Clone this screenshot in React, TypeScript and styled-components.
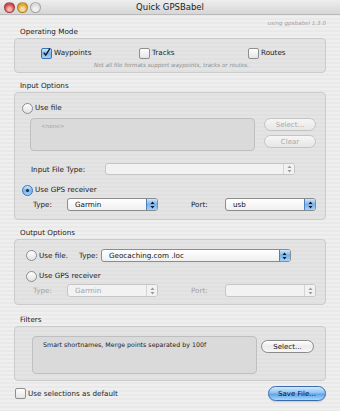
import { createGlobalStyle, styled } from "styled-components";

const GlobalStyle = createGlobalStyle`
  html, body {
    margin: 0;
    padding: 0;
  }
  body {
    font-family: "DejaVu Sans", "Liberation Sans", sans-serif;
    color: #1a1a1a;
  }
`;

const Window = styled.div`
  width: 340px;
  height: 411px;
  overflow: hidden;
  background: repeating-linear-gradient(to bottom, #efefef 0 2px, #e9e9e9 2px 4px);
`;

const TitleBar = styled.div`
  height: 15px;
  display: grid;
  grid-template-columns: 1fr auto 1fr;
  align-items: center;
  background: linear-gradient(to bottom, #eeeeee, #d6d6d6);
  border-bottom: 1px solid #b9b9b9;
  box-sizing: border-box;
`;

const Lights = styled.div`
  display: flex;
  gap: 2px;
  padding-left: 4px;
`;

const Light = styled.span<{ $c: string }>`
  width: 11px;
  height: 11px;
  border-radius: 50%;
  box-sizing: border-box;
  border: 1px solid rgba(0, 0, 0, 0.25);
  background: radial-gradient(circle at 50% 70%, #ffffff99 0 20%, transparent 60%),
    ${(p) => p.$c};
`;

const Title = styled.div`
  font-size: 8.5px;
  color: #222;
`;

const Content = styled.div`
  padding: 0 14px;
`;

const Version = styled.div`
  padding-top: 4px;
  line-height: 8px;
  font-size: 5.6px;
  font-style: italic;
  color: #a2a2a2;
  text-align: right;
`;

const SectionLabel = styled.div<{ $top?: number }>`
  margin-top: ${(p) => p.$top ?? 0}px;
  padding-left: 6px;
  line-height: 10px;
  font-size: 7.2px;
  margin-bottom: 1px;
`;

const Group = styled.div<{ $pad: string }>`
  border: 1px solid #cbcbcb;
  border-radius: 4px;
  background: rgba(200, 200, 200, 0.28);
  padding: ${(p) => p.$pad};
`;

const ModeRow = styled.div`
  display: grid;
  grid-template-columns: 98px 109px auto;
  padding-left: 26px;
  height: 12px;
  align-items: center;
`;

const Note = styled.div`
  margin-top: 2px;
  line-height: 8px;
  font-size: 5.6px;
  font-style: italic;
  color: #8f8f8f;
  text-align: center;
  padding-left: 3px;
`;

const Option = styled.label<{ $dim?: boolean }>`
  display: flex;
  align-items: center;
  gap: 2px;
  font-size: 7.2px;
  line-height: 12px;
  color: ${(p) => (p.$dim ? "#a3a3a3" : "#1a1a1a")};
`;

const Box = styled.span<{ $on?: boolean }>`
  width: 11px;
  height: 11px;
  box-sizing: border-box;
  border-radius: 2px;
  border: 1px solid ${(p) => (p.$on ? "#3d6fb5" : "#8e8e8e")};
  background: ${(p) =>
    p.$on
      ? "linear-gradient(to bottom, #d6ebfc, #78b4ee 50%, #a9d3f7)"
      : "linear-gradient(to bottom, #fefefe, #e5e5e5)"};
  display: flex;
  align-items: center;
  justify-content: center;
`;

const Round = styled.span<{ $on?: boolean }>`
  width: 11px;
  height: 11px;
  box-sizing: border-box;
  border-radius: 50%;
  border: 1px solid ${(p) => (p.$on ? "#3d6fb5" : "#8e8e8e")};
  background: ${(p) =>
    p.$on
      ? "linear-gradient(to bottom, #d6ebfc, #78b4ee 50%, #a9d3f7)"
      : "linear-gradient(to bottom, #fefefe, #e2e2e2)"};
  display: flex;
  align-items: center;
  justify-content: center;
  &::after {
    content: "";
    width: 3px;
    height: 3px;
    border-radius: 50%;
    background: ${(p) => (p.$on ? "#1c2c44" : "transparent")};
  }
`;

const Tick = () => (
  <svg width="11" height="11" viewBox="0 0 11 11" style={{ marginTop: -2 }}>
    <path d="M2.2 5.6 L4.6 8.6 L9.6 0.8" fill="none" stroke="#111" strokeWidth="1.6" />
  </svg>
);

const Check = ({ label, on, dim }: { label: string; on?: boolean; dim?: boolean }) => (
  <Option $dim={dim}>
    <Box $on={on}>{on ? <Tick /> : null}</Box>
    {label}
  </Option>
);

const Radio = ({ label, on }: { label: string; on?: boolean }) => (
  <Option>
    <Round $on={on} />
    {label}
  </Option>
);

const Row = styled.div<{ $top?: number; $left?: number; $h?: number }>`
  display: flex;
  align-items: center;
  margin-top: ${(p) => p.$top ?? 0}px;
  padding-left: ${(p) => p.$left ?? 0}px;
  height: ${(p) => (p.$h ? `${p.$h}px` : "auto")};
`;

const FieldLabel = styled.span<{ $w: number; $dim?: boolean }>`
  width: ${(p) => p.$w}px;
  flex: none;
  font-size: 7.2px;
  color: ${(p) => (p.$dim ? "#a3a3a3" : "#1a1a1a")};
`;

const Well = styled.div<{ $w: number; $h: number }>`
  width: ${(p) => p.$w}px;
  height: ${(p) => p.$h}px;
  box-sizing: border-box;
  border: 1px solid #bfbfbf;
  border-radius: 4px;
  background: #dadada;
  padding: 3px 10px;
  flex: none;
`;

const WellText = styled.div<{ $dim?: boolean }>`
  font-size: ${(p) => (p.$dim ? "5.6px" : "6.3px")};
  line-height: 9px;
  color: ${(p) => (p.$dim ? "#a5a5a5" : "#222")};
`;

const Buttons = styled.div`
  display: flex;
  flex-direction: column;
  gap: 4px;
  margin-left: 9px;
`;

const PushButton = styled.div<{ $w: number; $disabled?: boolean }>`
  width: ${(p) => p.$w}px;
  height: 13px;
  box-sizing: border-box;
  border-radius: 7px;
  border: 1px solid ${(p) => (p.$disabled ? "#c4c4c4" : "#8a8a8a")};
  background: ${(p) =>
    p.$disabled
      ? "linear-gradient(to bottom, #f6f6f6, #e6e6e6)"
      : "linear-gradient(to bottom, #ffffff, #ececec 50%, #f7f7f7)"};
  color: ${(p) => (p.$disabled ? "#a8a8a8" : "#111")};
  font-size: 7px;
  display: flex;
  align-items: center;
  justify-content: center;
`;

const SaveButton = styled.div`
  width: 58px;
  height: 15px;
  box-sizing: border-box;
  border-radius: 8px;
  border: 1px solid #3c6aa8;
  background: linear-gradient(to bottom, #d2e9fd, #8fc3f3 45%, #5ea4ea 55%, #a8d6fb);
  color: #111;
  font-size: 7px;
  display: flex;
  align-items: center;
  justify-content: center;
  box-shadow: 0 1px 1px rgba(0, 0, 0, 0.15);
`;

const PopupBox = styled.div<{ $w: number; $h: number; $disabled?: boolean }>`
  width: ${(p) => p.$w}px;
  height: ${(p) => p.$h}px;
  box-sizing: border-box;
  flex: none;
  display: flex;
  border-radius: 3px;
  border: 1px solid ${(p) => (p.$disabled ? "#c6c6c6" : "#8c8c8c")};
  background: ${(p) =>
    p.$disabled ? "#f2f2f2" : "linear-gradient(to bottom, #ffffff, #f0f0f0)"};
  overflow: hidden;
`;

const PopupValue = styled.div<{ $disabled?: boolean }>`
  flex: 1;
  padding-left: 7px;
  font-size: 7.2px;
  display: flex;
  align-items: center;
  color: ${(p) => (p.$disabled ? "#a3a3a3" : "#111")};
`;

const PopupCap = styled.div<{ $disabled?: boolean }>`
  width: 10px;
  border-left: 1px solid ${(p) => (p.$disabled ? "#d4d4d4" : "#4e7fc0")};
  background: ${(p) =>
    p.$disabled
      ? "#f2f2f2"
      : "linear-gradient(to bottom, #cfe6fc, #76b2ee 50%, #a6d2f9)"};
  display: flex;
  align-items: center;
  justify-content: center;
`;

const Popup = ({
  w,
  h = 13,
  value,
  disabled,
}: {
  w: number;
  h?: number;
  value?: string;
  disabled?: boolean;
}) => (
  <PopupBox $w={w} $h={h} $disabled={disabled}>
    <PopupValue $disabled={disabled}>{value}</PopupValue>
    <PopupCap $disabled={disabled}>
      <svg width="5" height="8" viewBox="0 0 5 8">
        <path d="M2.5 0.5 L4.5 3 L0.5 3 Z M2.5 7.5 L4.5 5 L0.5 5 Z" fill={disabled ? "#9a9a9a" : "#1b1b1b"} />
      </svg>
    </PopupCap>
  </PopupBox>
);

const Footer = styled.div`
  margin-top: 5px;
  height: 15px;
  display: flex;
  align-items: center;
  justify-content: space-between;
  padding-left: 1px;
`;

export default function App() {
  return (
    <>
      <GlobalStyle />
      <Window>
        <TitleBar>
          <Lights>
            <Light $c="#d94a4a" />
            <Light $c="#e2a82b" />
            <Light $c="#dcdcdc" />
          </Lights>
          <Title>Quick GPSBabel</Title>
          <div />
        </TitleBar>
        <Content>
          <Version>using gpsbabel 1.3.0</Version>

          <SectionLabel>Operating Mode</SectionLabel>
          <Group $pad="8px 0 3px">
            <ModeRow>
              <Check label="Waypoints" on />
              <Check label="Tracks" />
              <Check label="Routes" />
            </ModeRow>
            <Note>Not all file formats support waypoints, tracks or routes.</Note>
          </Group>

          <SectionLabel $top={8}>Input Options</SectionLabel>
          <Group $pad="9px 0 8px">
            <Row $left={7} $h={12}>
              <Radio label="Use file" />
            </Row>
            <Row $top={4} $left={15} style={{ alignItems: "flex-start" }}>
              <Well $w={225} $h={33}>
                <WellText $dim>&lt;none&gt;</WellText>
              </Well>
              <Buttons>
                <PushButton $w={52} $disabled>Select...</PushButton>
                <PushButton $w={52} $disabled>Clear</PushButton>
              </Buttons>
            </Row>
            <Row $top={12} $left={16} $h={12}>
              <FieldLabel $w={74}>Input File Type:</FieldLabel>
              <Popup w={190} h={12} disabled />
            </Row>
            <Row $top={9} $left={7} $h={12}>
              <Radio label="Use GPS receiver" on />
            </Row>
            <Row $top={2} $left={18} $h={13}>
              <FieldLabel $w={34}>Type:</FieldLabel>
              <Popup w={91} value="Garmin" />
              <FieldLabel $w={34} style={{ marginLeft: 33 }}>Port:</FieldLabel>
              <Popup w={91} value="usb" />
            </Row>
          </Group>

          <SectionLabel $top={8}>Output Options</SectionLabel>
          <Group $pad="9px 0 7px">
            <Row $left={11} $h={13}>
              <Radio label="Use file." />
              <FieldLabel $w={22} style={{ marginLeft: 11 }}>Type:</FieldLabel>
              <Popup w={190} value="Geocaching.com .loc" />
            </Row>
            <Row $top={8} $left={11} $h={12}>
              <Radio label="Use GPS receiver" />
            </Row>
            <Row $top={2} $left={18} $h={13}>
              <FieldLabel $w={34} $dim>Type:</FieldLabel>
              <Popup w={91} value="Garmin" disabled />
              <FieldLabel $w={34} $dim style={{ marginLeft: 33 }}>Port:</FieldLabel>
              <Popup w={91} disabled />
            </Row>
          </Group>

          <SectionLabel $top={10}>Filters</SectionLabel>
          <Group $pad="9px 0 6px">
            <Row $left={17} style={{ alignItems: "flex-start" }}>
              <Well $w={225} $h={38}>
                <WellText>Smart shortnames, Merge points separated by 100f</WellText>
              </Well>
              <PushButton $w={53} style={{ marginLeft: 4, marginTop: 4 }}>
                Select...
              </PushButton>
            </Row>
          </Group>

          <Footer>
            <Check label="Use selections as default" />
            <SaveButton>Save File...</SaveButton>
          </Footer>
        </Content>
      </Window>
    </>
  );
}
